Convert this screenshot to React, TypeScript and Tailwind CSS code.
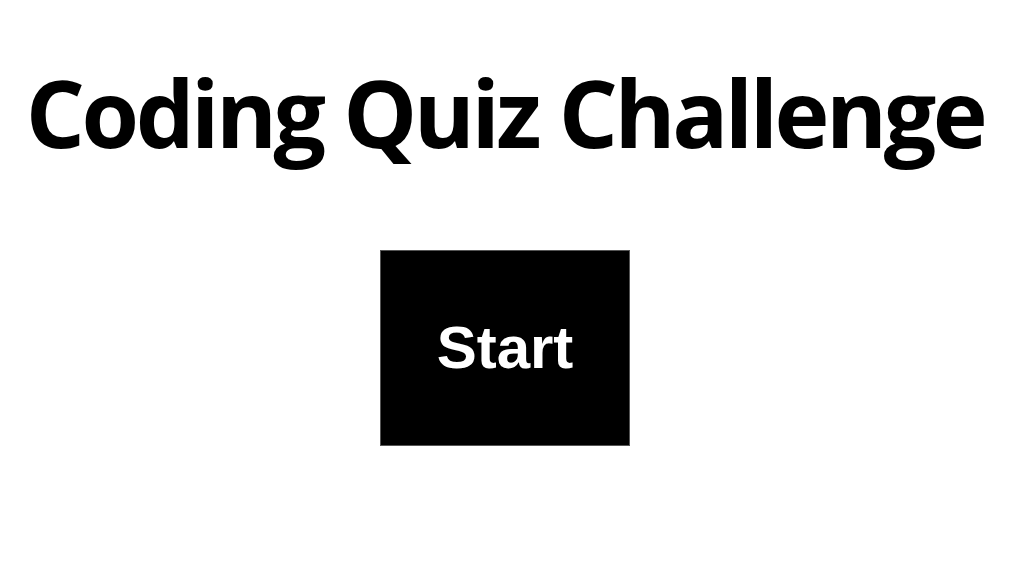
import React from 'react';

export default function App() {
  return (
    <div className="min-h-screen bg-white flex flex-col items-center">
      <h1 className="mt-[54px] mr-[6px] whitespace-nowrap text-[93px] leading-[116px] font-bold tracking-[-3.5px] text-black font-['Open_Sans',sans-serif]">
        Coding Quiz Challenge
      </h1>
      <button className="mt-[80px] mr-[6px] w-[250px] h-[196px] bg-black border border-[#555] text-white text-[60px] font-bold font-['Liberation_Sans',Arial,sans-serif]">
        Start
      </button>
    </div>
  );
}
